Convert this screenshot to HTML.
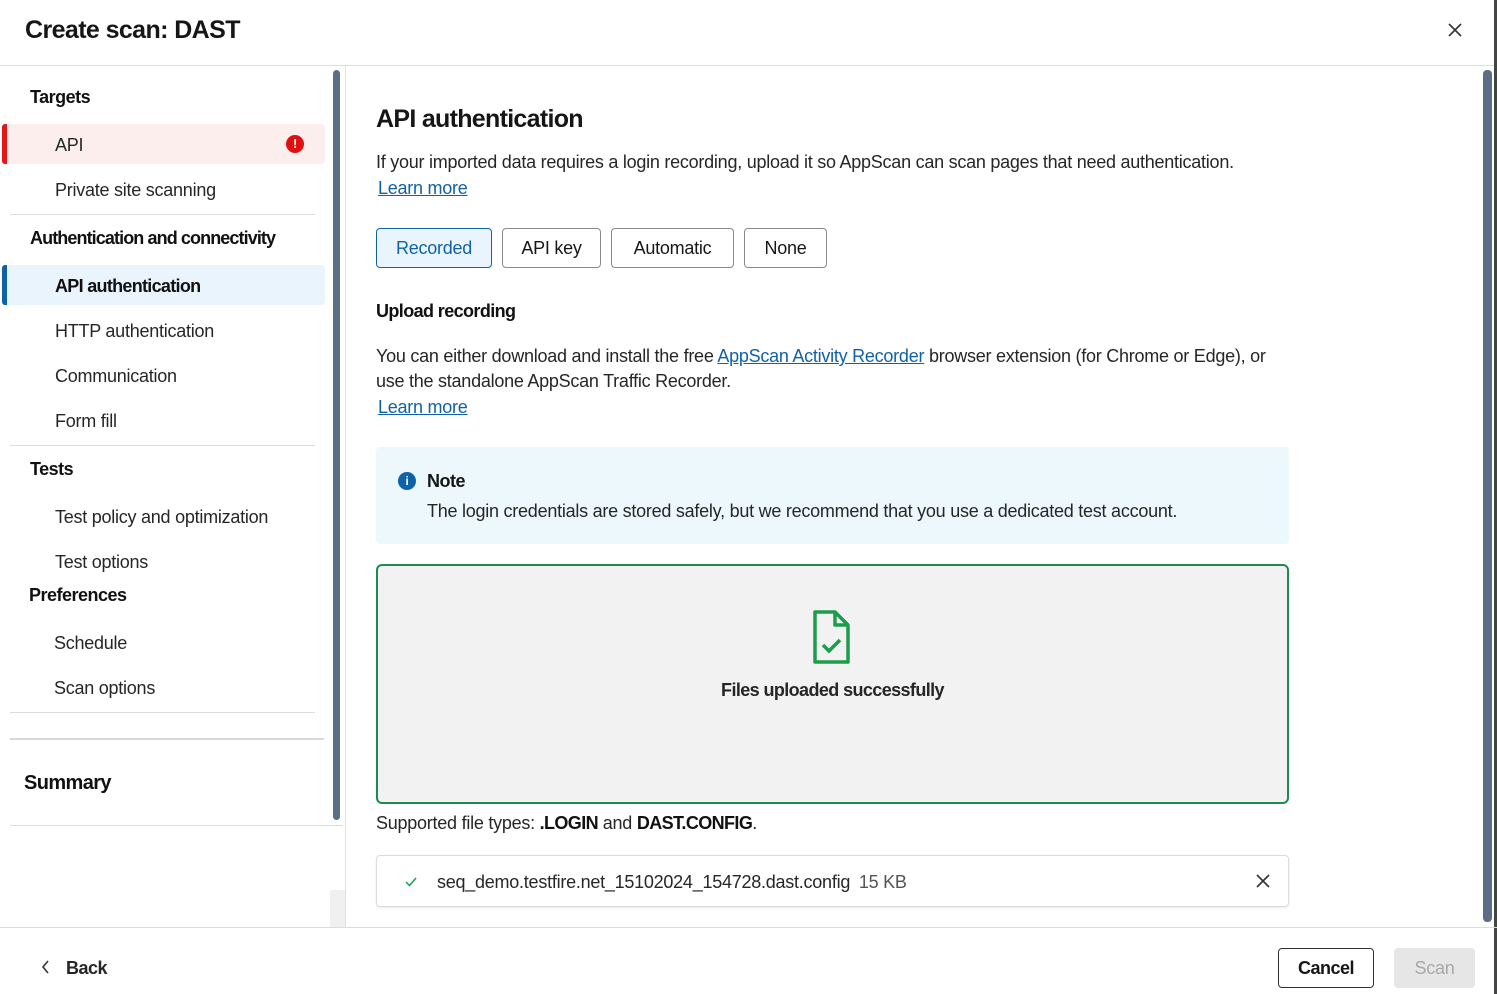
<!DOCTYPE html>
<html><head><style>
*{margin:0;padding:0;box-sizing:border-box}
body{width:1497px;height:994px;position:relative;background:#fff;font-family:"Liberation Sans",sans-serif;color:#161616;overflow:hidden;letter-spacing:-0.25px}
.a{position:absolute;white-space:nowrap}
.nav{font-size:18px;color:#262626}
.hd{font-size:18px;font-weight:bold;color:#111;letter-spacing:-0.5px}
.hr{position:absolute;height:1px;background:#dcdcdc}
.btn{position:absolute;top:228px;height:40px;border:1px solid #8a8a8a;border-radius:4px;font-size:18px;display:flex;align-items:center;justify-content:center;color:#161616}
a{color:#0f62a8;text-decoration:underline}
</style></head><body>
<div class="a" style="left:25px;top:16px;font-size:25px;font-weight:bold;color:#161616;letter-spacing:-0.6px">Create scan: DAST</div>
<svg style="position:absolute;left:1448px;top:23px" width="14" height="14"><path d="M1 1l12 12M13 1L1 13" stroke="#333" stroke-width="1.6"/></svg>
<div class="hr" style="left:0;top:65px;width:1497px"></div>
<div style="position:absolute;left:1494px;top:0;width:3px;height:994px;background:#444"></div>

<div class="a hd" style="left:30px;top:87px">Targets</div>
<div style="position:absolute;left:2px;top:124px;width:323px;height:40px;background:#fdeeee;border-radius:4px"></div>
<div style="position:absolute;left:2px;top:124px;width:5px;height:40px;background:#e81515;border-radius:3px 0 0 3px"></div>
<div class="a nav" style="left:55px;top:135px">API</div>
<div style="position:absolute;left:286px;top:135px;width:18px;height:18px;border-radius:50%;background:#e01010;color:#fff;font-size:13px;font-weight:bold;text-align:center;line-height:18px">!</div>
<div class="a nav" style="left:55px;top:180px">Private site scanning</div>
<div class="hr" style="left:10px;top:214px;width:305px"></div>
<div class="a hd" style="left:30px;top:228px;letter-spacing:-0.9px">Authentication and connectivity</div>
<div style="position:absolute;left:2px;top:265px;width:323px;height:40px;background:#eaf4fd;border-radius:4px"></div>
<div style="position:absolute;left:2px;top:265px;width:5px;height:40px;background:#0f62a8;border-radius:3px 0 0 3px"></div>
<div class="a hd" style="left:55px;top:276px;letter-spacing:-0.7px">API authentication</div>
<div class="a nav" style="left:55px;top:321px">HTTP authentication</div>
<div class="a nav" style="left:55px;top:366px">Communication</div>
<div class="a nav" style="left:55px;top:411px">Form fill</div>
<div class="hr" style="left:10px;top:445px;width:305px"></div>
<div class="a hd" style="left:30px;top:459px">Tests</div>
<div class="a nav" style="left:55px;top:507px">Test policy and optimization</div>
<div class="a nav" style="left:55px;top:552px">Test options</div>
<div class="a hd" style="left:29px;top:585px">Preferences</div>
<div class="a nav" style="left:54px;top:633px">Schedule</div>
<div class="a nav" style="left:54px;top:678px">Scan options</div>
<div class="hr" style="left:10px;top:712px;width:305px"></div>
<div style="position:absolute;left:10px;top:738px;width:314px;height:2px;background:#d8d8d8"></div>
<div class="a" style="left:24px;top:772px;font-size:20px;font-weight:bold;color:#111;letter-spacing:-0.6px">Summary</div>
<div class="hr" style="left:10px;top:825px;width:333px"></div>
<div style="position:absolute;left:333px;top:70px;width:7px;height:750px;background:#5a6f85;border-radius:4px"></div>
<div style="position:absolute;left:330px;top:890px;width:15px;height:37px;background:#f0f0f0"></div>
<div style="position:absolute;left:345px;top:66px;width:1px;height:861px;background:#e0e0e0"></div>

<div class="a" style="left:376px;top:105px;font-size:25px;font-weight:bold;letter-spacing:-0.7px">API authentication</div>
<div class="a" style="left:376px;top:152px;font-size:18px;color:#262626">If your imported data requires a login recording, upload it so AppScan can scan pages that need authentication.</div>
<div class="a" style="left:378px;top:178px;font-size:18px"><a>Learn more</a></div>
<div class="btn" style="left:376px;width:116px;background:#eaf4fd;border-color:#0f62a8;color:#0f62a8">Recorded</div>
<div class="btn" style="left:502px;width:99px">API key</div>
<div class="btn" style="left:611px;width:123px">Automatic</div>
<div class="btn" style="left:744px;width:83px">None</div>
<div class="a" style="left:376px;top:301px;font-size:18px;font-weight:bold;color:#111;letter-spacing:-0.6px">Upload recording</div>
<div class="a" style="left:376px;top:346px;font-size:18px;color:#262626">You can either download and install the free <a>AppScan Activity Recorder</a> browser extension (for Chrome or Edge), or</div>
<div class="a" style="left:376px;top:371px;font-size:18px;color:#262626">use the standalone AppScan Traffic Recorder.</div>
<div class="a" style="left:378px;top:397px;font-size:18px"><a>Learn more</a></div>
<div style="position:absolute;left:376px;top:447px;width:913px;height:97px;background:#edf8fd;border-radius:4px"></div>
<div style="position:absolute;left:398px;top:472px;width:18px;height:18px;border-radius:50%;background:#0f62a8;color:#fff;font-size:12px;font-weight:bold;text-align:center;line-height:18px">i</div>
<div class="a" style="left:427px;top:471px;font-size:18px;font-weight:bold;letter-spacing:-0.5px">Note</div>
<div class="a" style="left:427px;top:501px;font-size:18px;color:#262626">The login credentials are stored safely, but we recommend that you use a dedicated test account.</div>
<div style="position:absolute;left:376px;top:564px;width:913px;height:240px;background:#f2f2f2;border:2px solid #1d8a4f;border-radius:6px"></div>
<svg style="position:absolute;left:810px;top:608px" width="44" height="58" viewBox="0 0 44 58"><path d="M5 4h20l13 13v37H5z" fill="none" stroke="#1a9e4b" stroke-width="3.5" stroke-linejoin="round"/><path d="M25 4v13h13" fill="none" stroke="#1a9e4b" stroke-width="3.5" stroke-linejoin="round"/><path d="M13 37l6 6 11-11" fill="none" stroke="#1a9e4b" stroke-width="3.5"/></svg>
<div class="a" style="left:0;width:1665px;text-align:center;top:680px;font-size:18px;font-weight:bold;color:#262626;letter-spacing:-0.6px">Files uploaded successfully</div>
<div class="a" style="left:376px;top:813px;font-size:18px;color:#262626">Supported file types: <b style="color:#111;letter-spacing:-0.6px">.LOGIN</b> and <b style="color:#111;letter-spacing:-0.6px">DAST.CONFIG</b>.</div>
<div style="position:absolute;left:376px;top:855px;width:913px;height:52px;border:1px solid #dcdcdc;border-radius:4px;box-shadow:0 1px 2px rgba(0,0,0,.08)"></div>
<svg style="position:absolute;left:404px;top:876px" width="14" height="12"><path d="M2 6l3.5 3.5L12 2" fill="none" stroke="#1a9e4b" stroke-width="1.5"/></svg>
<div class="a" style="left:437px;top:872px;font-size:18px;color:#262626">seq_demo.testfire.net_15102024_154728.dast.config <span style="color:#555;margin-left:4px">15 KB</span></div>
<svg style="position:absolute;left:1256px;top:874px" width="14" height="14"><path d="M1 1l12 12M13 1L1 13" stroke="#333" stroke-width="1.6"/></svg>
<div style="position:absolute;left:1483px;top:70px;width:9px;height:852px;background:#5a6f85;border-radius:4px"></div>

<div class="hr" style="left:0;top:927px;width:1497px"></div>
<svg style="position:absolute;left:41px;top:960px" width="10" height="14"><path d="M7 1L2 7l5 6" fill="none" stroke="#333" stroke-width="1.6"/></svg>
<div class="a" style="left:66px;top:958px;font-size:18px;font-weight:bold;color:#262626;letter-spacing:-0.5px">Back</div>
<div style="position:absolute;left:1278px;top:948px;width:96px;height:40px;border:1px solid #333;border-radius:4px;font-size:18px;font-weight:bold;letter-spacing:-0.5px;display:flex;align-items:center;justify-content:center">Cancel</div>
<div style="position:absolute;left:1394px;top:948px;width:81px;height:40px;background:#e6e6e6;border-radius:4px;font-size:18px;color:#a8a8a8;display:flex;align-items:center;justify-content:center">Scan</div>
</body></html>
